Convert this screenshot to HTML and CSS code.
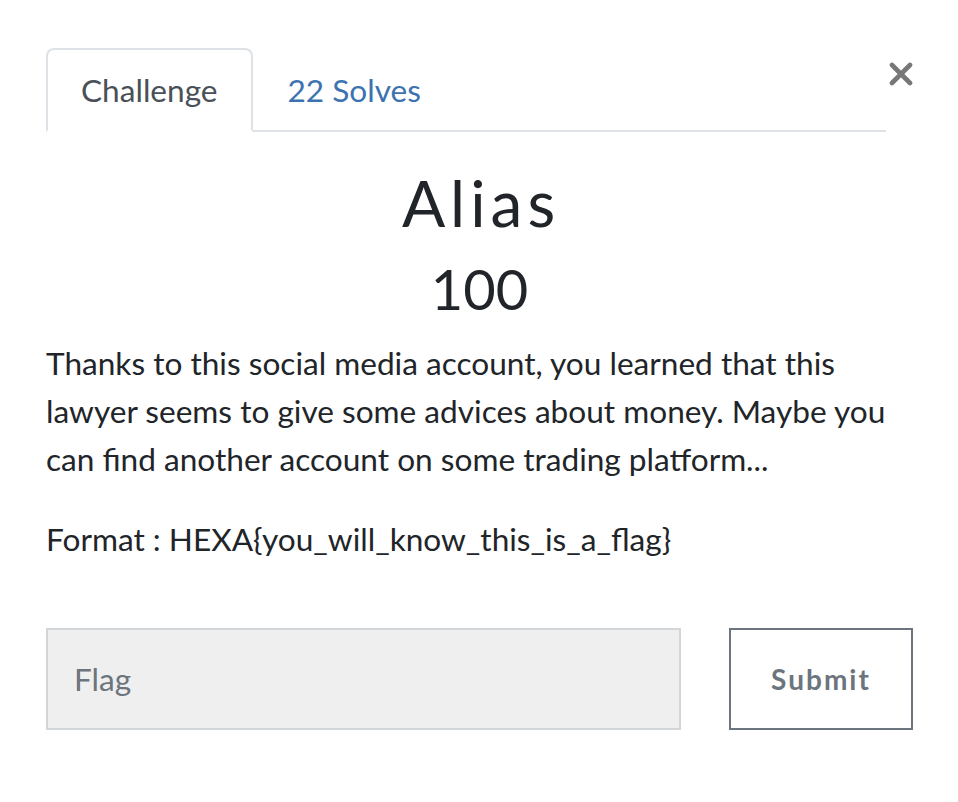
FILE: index.html
```html
<!DOCTYPE html>
<html>
<head>
<meta charset="utf-8">
<link rel="stylesheet" href="styles.css">
</head>
<body>
<div class="modal">
  <div class="head">
    <nav class="tabs">
      <a class="tab active">Challenge</a>
      <a class="tab link">22 Solves</a>
    </nav>
    <button class="close" aria-label="Close">
      <svg width="24" height="24" viewBox="0 0 24 24"><path d="M3 3 L21 21 M21 3 L3 21" stroke="#777" stroke-width="4.6" stroke-linecap="round"/></svg>
    </button>
  </div>
  <h2 class="title">Alias</h2>
  <h3 class="value">100</h3>
  <div class="desc">
    <p>Thanks to this social media account, you learned that this lawyer seems to give some advices about money. Maybe you can find another account on some trading platform...</p>
    <p>Format : HEXA{you_will_know_this_is_a_flag}</p>
  </div>
  <form class="submit-row">
    <input class="flag" type="text" placeholder="Flag">
    <button class="submit" type="button">Submit</button>
  </form>
</div>
</body>
</html>
```
FILE: styles.css
```css
html, body {
  margin: 0;
  background: #fff;
}
body {
  font-family: "Lato", "Helvetica Neue", Arial, sans-serif;
  color: #212529;
  font-size: 31.6px;
  line-height: 48px;
}
.modal {
  padding: 48px 45px 0 46px;
}
.head {
  display: flex;
  align-items: flex-start;
}
.tabs {
  flex: 1;
  display: flex;
  border-bottom: 2px solid #dee2e6;
}
.tab {
  display: block;
  padding: 16px 33px;
  border: 2px solid transparent;
  border-radius: 8px 8px 0 0;
  margin-bottom: -2px;
  line-height: 48px;
}
.tab.active {
  color: #495057;
  border-color: #dee2e6 #dee2e6 #fff;
  background: #fff;
}
.tab.link {
  color: #3d72b0;
}
.close {
  width: 27px;
  height: 60px;
  padding: 14px 0 0 2px;
  border: 0;
  background: none;
  display: flex;
  justify-content: center;
  align-items: flex-start;
}
.title {
  margin: 33px 0 13px;
  text-align: center;
  font-weight: 400;
  font-size: 64px;
  line-height: 1.2;
  letter-spacing: 5px;
  text-indent: 3px;
}
.value {
  margin: 0 0 17px;
  text-align: center;
  font-weight: 400;
  font-size: 56px;
  line-height: 1.2;
}
.desc p {
  margin: 0 0 32px;
}
.submit-row {
  display: flex;
  gap: 48px;
  margin-top: 65px;
}
.flag {
  flex: 1;
  height: 102px;
  box-sizing: border-box;
  background: #efefef;
  border: 2px solid #d3d6d9;
  padding: 0 26px;
  font-family: "Lato", sans-serif;
  font-size: 31.6px;
  color: #495057;
  outline: none;
}
.flag::placeholder {
  color: #6c757d;
}
.submit {
  width: 184px;
  height: 102px;
  box-sizing: border-box;
  background: #fff;
  border: 2px solid #6c757d;
  color: #6c757d;
  font-family: "Lato", sans-serif;
  font-weight: 700;
  font-size: 28px;
  letter-spacing: 2px;
}
```
